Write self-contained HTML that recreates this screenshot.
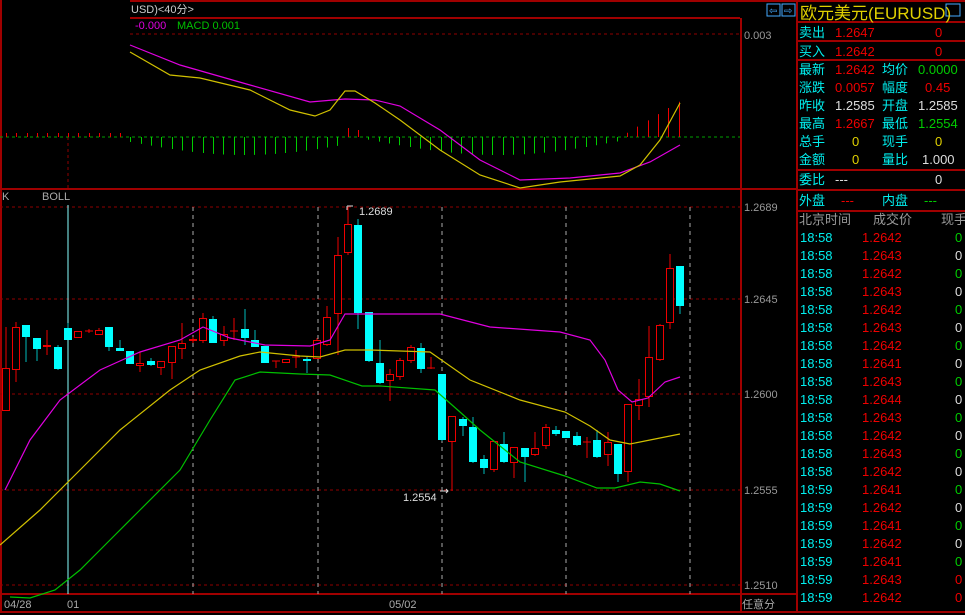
<!DOCTYPE html>
<html><head><meta charset="utf-8">
<style>
html,body{margin:0;padding:0;background:#000;width:965px;height:615px;overflow:hidden}
svg{display:block}
text{font-family:"Liberation Sans","WenQuanYi Zen Hei",sans-serif}
</style></head>
<body>
<svg id="s" width="965" height="615" viewBox="0 0 965 615" xmlns="http://www.w3.org/2000/svg">
<rect width="965" height="615" fill="#000"/>
<!-- borders -->
<g stroke="#a00000" stroke-width="2" fill="none">
<line x1="1" y1="0" x2="1" y2="612"/>
<line x1="130" y1="1" x2="965" y2="1"/>
<line x1="130" y1="18" x2="740" y2="18"/>
<line x1="0" y1="189" x2="740" y2="189"/>
<line x1="0" y1="594" x2="797" y2="594"/>
<line x1="0" y1="612" x2="965" y2="612"/>
<line x1="741" y1="18" x2="741" y2="612"/>
<line x1="797" y1="0" x2="797" y2="612"/>
<line x1="741" y1="189" x2="797" y2="189"/>
<line x1="741" y1="594" x2="797" y2="594"/>
<line x1="797" y1="22" x2="965" y2="22"/>
<line x1="797" y1="41" x2="965" y2="41"/>
<line x1="797" y1="60" x2="965" y2="60"/>
<line x1="797" y1="170" x2="965" y2="170"/>
<line x1="797" y1="190" x2="965" y2="190"/>
<line x1="797" y1="211" x2="965" y2="211"/>
</g>
<g stroke="#900000" stroke-width="1" stroke-dasharray="3,3" fill="none">
<line x1="130" y1="34" x2="740" y2="34"/>
<line x1="0" y1="207" x2="740" y2="207"/>
<line x1="0" y1="299" x2="740" y2="299"/>
<line x1="0" y1="394" x2="740" y2="394"/>
<line x1="0" y1="490" x2="740" y2="490"/>
<line x1="0" y1="585" x2="740" y2="585"/>
<line x1="68" y1="137" x2="68" y2="188"/>
</g>
<line x1="0" y1="137" x2="740" y2="137" stroke="#00a000" stroke-dasharray="3,3"/>
<g stroke="#aaa" stroke-width="1" stroke-dasharray="4,4">
<line x1="193" y1="207" x2="193" y2="594"/>
<line x1="318" y1="207" x2="318" y2="594"/>
<line x1="442" y1="207" x2="442" y2="594"/>
<line x1="566" y1="207" x2="566" y2="594"/>
<line x1="690" y1="207" x2="690" y2="594"/>
</g>
<line x1="68" y1="205" x2="68" y2="594" stroke="#8ff" stroke-width="1"/>
<g id="hist"></g>
<g id="cand"></g>
<!-- macd lines -->
<polyline fill="none" stroke="#e000e0" stroke-width="1.2" points="130,45 180,65 250,85 310,102 345,99 375,100 400,106 440,130 480,160 520,180 570,178 620,173 650,162 680,145"/>
<polyline fill="none" stroke="#d0c000" stroke-width="1.2" points="130,52 170,75 200,78 250,90 290,110 315,116 330,110 345,91 355,91 375,103 400,120 440,150 480,175 520,188 560,182 620,176 640,165 660,140 680,103"/>
<!-- boll -->
<polyline fill="none" stroke="#e000e0" stroke-width="1.2" points="5,490 30,440 60,400 100,370 140,352 180,340 203,327 230,338 265,345 310,346 330,340 345,314 440,314 490,327 560,332 590,340 605,360 618,390 632,402 648,398 665,382 680,377"/>
<polyline fill="none" stroke="#d0c000" stroke-width="1.2" points="0,545 40,510 80,470 120,430 170,390 200,370 240,356 260,352 300,356 320,357 345,350 370,350 430,352 470,380 520,400 565,412 590,426 610,440 630,444 650,440 680,434"/>
<polyline fill="none" stroke="#00c000" stroke-width="1.2" points="10,597 30,598 55,590 80,570 110,540 140,510 180,470 210,420 235,380 260,372 300,374 330,375 362,386 380,386 435,390 460,412 480,430 520,462 565,476 597,488 615,488 640,482 660,484 680,491"/>
<!-- texts -->
<g font-size="11">
<text x="131" y="13" fill="#ccc">USD)&lt;40分&gt;</text>
<text x="135" y="29" fill="#e000e0">-0.000</text>
<text x="177" y="29" fill="#00c000">MACD  0.001</text>
<text x="2" y="200" fill="#aaa">K</text>
<text x="42" y="200" fill="#aaa">BOLL</text>
<text x="359" y="215" fill="#ddd">1.2689</text>
<text x="403" y="501" fill="#ddd">1.2554</text>
<text x="4" y="608" fill="#aaa">04/28</text>
<text x="67" y="608" fill="#aaa">01</text>
<text x="389" y="608" fill="#aaa">05/02</text>
<text x="742" y="608" fill="#aaa">任意分</text>
<g fill="#999">
<text x="744" y="39">0.003</text>
<text x="744" y="211">1.2689</text>
<text x="744" y="303">1.2645</text>
<text x="744" y="398">1.2600</text>
<text x="744" y="494">1.2555</text>
<text x="744" y="589">1.2510</text>
</g>
</g>
<path d="M347,206 h6 M347,206 v4" stroke="#ddd" fill="none"/>
<path d="M440,491 h8 M446,489 l2,2 -2,2" stroke="#ddd" fill="none"/>
<!-- right panel -->
<rect x="767" y="4" width="13" height="12" fill="none" stroke="#4af"/>
<rect x="782" y="4" width="13" height="12" fill="none" stroke="#4af"/>
<text x="769" y="14" font-size="10" fill="#4af">⇦</text>
<text x="784" y="14" font-size="10" fill="#4af">⇨</text>
<rect x="946" y="4" width="14" height="12" fill="none" stroke="#4af"/>
<text x="800" y="19" font-size="17" fill="#e0d000">欧元美元(EURUSD)</text>
<g font-size="13">
<text x="799" y="37" fill="#0ee">卖出</text><text x="835" y="37" fill="#e00">1.2647</text><text x="935" y="37" fill="#e00">0</text>
<text x="799" y="56" fill="#0ee">买入</text><text x="835" y="56" fill="#e00">1.2642</text><text x="935" y="56" fill="#e00">0</text>
<text x="799" y="74" fill="#0ee">最新</text><text x="835" y="74" fill="#e00">1.2642</text><text x="882" y="74" fill="#0ee">均价</text><text x="918" y="74" fill="#0c0">0.0000</text>
<text x="799" y="92" fill="#0ee">涨跌</text><text x="835" y="92" fill="#e00">0.0057</text><text x="882" y="92" fill="#0ee">幅度</text><text x="925" y="92" fill="#e00">0.45</text>
<text x="799" y="110" fill="#0ee">昨收</text><text x="835" y="110" fill="#ddd">1.2585</text><text x="882" y="110" fill="#0ee">开盘</text><text x="918" y="110" fill="#ddd">1.2585</text>
<text x="799" y="128" fill="#0ee">最高</text><text x="835" y="128" fill="#e00">1.2667</text><text x="882" y="128" fill="#0ee">最低</text><text x="918" y="128" fill="#0c0">1.2554</text>
<text x="799" y="146" fill="#0ee">总手</text><text x="852" y="146" fill="#e0d000">0</text><text x="882" y="146" fill="#0ee">现手</text><text x="935" y="146" fill="#e0d000">0</text>
<text x="799" y="164" fill="#0ee">金额</text><text x="852" y="164" fill="#e0d000">0</text><text x="882" y="164" fill="#0ee">量比</text><text x="922" y="164" fill="#ddd">1.000</text>
<text x="799" y="184" fill="#0ee">委比</text><text x="835" y="184" fill="#ddd">---</text><text x="935" y="184" fill="#ddd">0</text>
<text x="799" y="205" fill="#0ee">外盘</text><text x="841" y="205" fill="#e00">---</text><text x="882" y="205" fill="#0ee">内盘</text><text x="924" y="205" fill="#0c0">---</text>
<text x="799" y="224" fill="#999">北京时间</text><text x="873" y="224" fill="#999">成交价</text><text x="941" y="224" fill="#999">现手</text>
</g>
<g id="list" font-size="13"></g>
</svg>
<script>
var NS="http://www.w3.org/2000/svg";
function el(p,t,a){var e=document.createElementNS(NS,t);for(var k in a)e.setAttribute(k,a[k]);p.appendChild(e);return e;}
// x, o(top/bottom y), c, hi, lo, type r=red hollow c=cyan
var C=[
[6,'r',368,411,327,411],[16,'r',327,370,322,382],[26,'c',325,337,325,362],[37,'c',338,349,338,361],[47,'r',345,347,330,355],
[58,'c',347,369,345,370],[68,'c',328,340,323,340],[78,'r',331,338,331,338],[89,'r',331,332,329,333],[99,'r',330,335,328,335],
[109,'c',327,347,327,351],[120,'c',348,351,340,351],[130,'c',351,364,351,364],[140,'r',363,366,352,372],[151,'c',361,365,358,366],
[161,'r',361,368,361,375],[172,'r',346,363,346,379],[182,'r',343,349,323,359],[193,'r',339,341,337,343],[203,'r',318,341,313,343],
[213,'c',319,343,316,343],[224,'r',334,341,326,346],[234,'r',331,332,318,340],[245,'c',329,338,309,345],[255,'c',340,347,330,347],
[265,'c',346,363,346,363],[276,'r',361,362,361,368],[286,'r',359,363,359,363],[296,'r',357,358,350,368],[307,'c',359,361,356,373],
[317,'r',340,359,338,359],[327,'r',317,345,306,346],[338,'r',255,314,237,355],[348,'r',224,253,207,255],[358,'c',225,313,219,329],
[369,'c',312,361,312,362],[380,'c',363,383,340,384],[390,'r',374,381,369,401],[400,'r',360,377,358,380],[411,'r',347,361,345,363],
[421,'c',348,369,343,373],[431,'r',368,369,357,369],[442,'c',374,440,374,441],[452,'r',416,442,416,491],[463,'c',419,426,417,436],
[473,'c',427,462,417,463],[484,'c',459,468,455,474],[494,'r',441,470,441,472],[504,'c',444,462,432,463],[514,'r',447,463,447,478],
[525,'c',448,457,448,482],[535,'r',448,455,432,456],[546,'r',427,446,424,449],[556,'c',430,434,426,436],[566,'c',431,438,431,438],
[577,'c',436,445,432,446],[587,'r',442,443,437,458],[597,'c',440,457,430,458],[608,'r',442,455,432,466],[618,'c',444,474,444,482],
[628,'r',404,472,404,482],[639,'r',399,406,379,420],[649,'r',357,397,326,407],[660,'r',325,360,324,361],[670,'r',268,323,254,329],[680,'c',266,306,266,314]];
var g=document.getElementById('cand');
C.forEach(function(d){var x=d[0],t=d[1],a=d[2],b=d[3],h=d[4],l=d[5];
 var col=t=='r'?'#e00':'#0ff';
 el(g,'line',{x1:x,y1:h,x2:x,y2:l,stroke:t=='r'?'#e00':'#0bb','stroke-width':1});
 if(b-a<2){el(g,'line',{x1:x-4,y1:a,x2:x+4,y2:a,stroke:col});}
 else if(t=='r'){el(g,'rect',{x:x-3.5,y:a+0.5,width:7,height:b-a-1,fill:'#000',stroke:col});}
 else el(g,'rect',{x:x-4,y:a,width:8,height:b-a,fill:col});
});
// histogram
var hg=document.getElementById('hist');
for(var i=0;i<66;i++){var x=6+i*10.35,v;
 if(x<125)v=-4; else if(x<340){var f=(x-125)/215;v=4+14*Math.sin(f*Math.PI*0.9);} else if(x<362)v=(x<350?-9:-7);
 else if(x<625){var f=(x-370)/255;v=3+15*Math.sin(f*Math.PI);} else {v=-((x-625)/55)*33-3;}
 el(hg,'line',{x1:Math.round(x)+.5,y1:137,x2:Math.round(x)+.5,y2:137+v,stroke:v<0?'#e00':'#0c0'});}
// list
var L=[['18:58','1.2642','g'],['18:58','1.2643','w'],['18:58','1.2642','g'],['18:58','1.2643','w'],['18:58','1.2642','g'],['18:58','1.2643','w'],['18:58','1.2642','g'],['18:58','1.2641','w'],['18:58','1.2643','g'],['18:58','1.2644','w'],['18:58','1.2643','g'],['18:58','1.2642','w'],['18:58','1.2643','g'],['18:58','1.2642','w'],['18:59','1.2641','g'],['18:59','1.2642','w'],['18:59','1.2641','g'],['18:59','1.2642','w'],['18:59','1.2641','g'],['18:59','1.2643','r'],['18:59','1.2642','r']];
var lg=document.getElementById('list');
L.forEach(function(r,i){var y=242+i*18;
 el(lg,'text',{x:800,y:y,fill:'#0ee'}).textContent=r[0];
 el(lg,'text',{x:862,y:y,fill:'#e00'}).textContent=r[1];
 el(lg,'text',{x:955,y:y,fill:r[2]=='g'?'#0c0':r[2]=='w'?'#ddd':'#e00'}).textContent='0';});
</script>
</body></html>
